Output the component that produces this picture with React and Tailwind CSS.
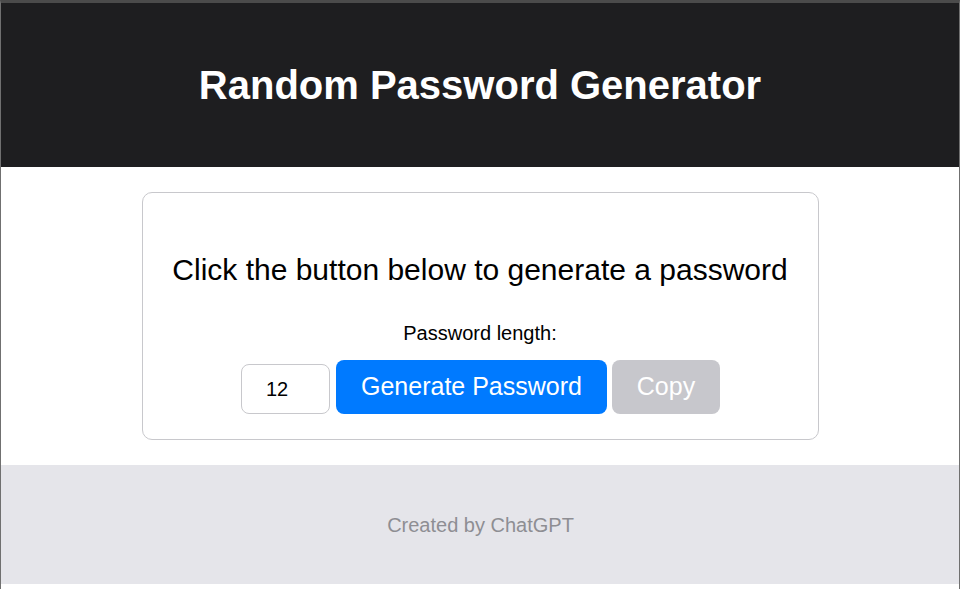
import React, { useState } from 'react';

const App = () => {
    const [length, setLength] = useState(12);

    return (
        <div
            className="h-[589px] w-[960px] overflow-hidden bg-white border-t-[3px] border-t-[#4b4b4b] border-x border-x-[#707070] flex flex-col"
            style={{ fontFamily: '"Liberation Sans", Arial, sans-serif' }}
        >
            {/* Header */}
            <header className="h-[164px] shrink-0 bg-[#1e1e20] flex items-center justify-center">
                <h1 className="text-[40px] font-bold text-white leading-none">Random Password Generator</h1>
            </header>

            {/* Main card */}
            <main className="shrink-0 py-[25px] flex justify-center">
                <div className="w-[677px] h-[248px] border border-[#c8c8cc] rounded-[10px] flex flex-col items-center pt-[62px]">
                    <h2 className="text-[30px] text-black leading-none">Click the button below to generate a password</h2>
                    <label className="mt-[38px] text-[20px] text-black leading-none">Password length:</label>
                    <div className="mt-[17px] ml-[1px] flex items-end gap-[5px]">
                        <input
                            type="number"
                            value={length}
                            onChange={(e) => setLength(e.target.value)}
                            className="w-[89px] h-[50px] border border-[#c8c8cc] rounded-[8px] px-[24px] text-[20px] text-black outline-none [appearance:textfield] [&::-webkit-inner-spin-button]:appearance-none"
                        />
                        <button className="ml-[1px] w-[271px] h-[54px] bg-[#007aff] rounded-[8px] text-[25px] text-white">
                            Generate Password
                        </button>
                        <button className="w-[108px] h-[54px] bg-[#c7c7cc] rounded-[8px] text-[25px] text-white">
                            Copy
                        </button>
                    </div>
                </div>
            </main>

            {/* Footer */}
            <footer className="h-[119px] shrink-0 bg-[#e5e5ea] flex items-center justify-center">
                <p className="ml-[1px] text-[20px] text-[#8e8e93]">Created by ChatGPT</p>
            </footer>
        </div>
    );
};

export default App;
